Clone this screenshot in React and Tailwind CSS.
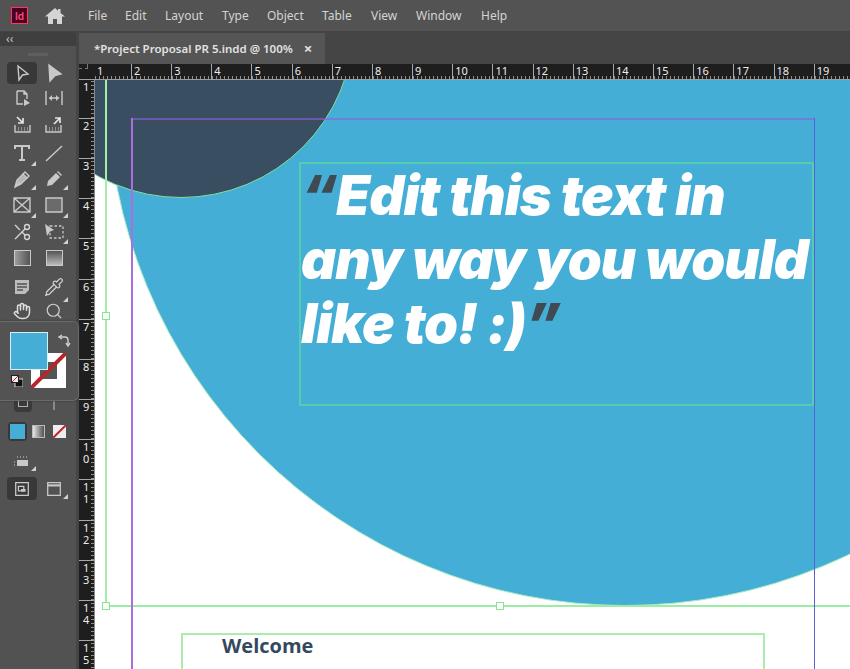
import React from 'react';
import { Hand, Search, Scissors, Pipette } from 'lucide-react';

const menus = [
  ['File', 'w-[37px]'],
  ['Edit', 'w-[40px]'],
  ['Layout', 'w-[57px]'],
  ['Type', 'w-[45px]'],
  ['Object', 'w-[55px]'],
  ['Table', 'w-[49px]'],
  ['View', 'w-[45px]'],
  ['Window', 'w-[65px]'],
  ['Help', 'w-[40px]'],
];

const hTicks = Array.from({ length: 18 }, (_, i) => i + 2);
const vTicks = Array.from({ length: 14 }, (_, i) => i + 2);

function Flyout() {
  return (
    <svg width="5" height="5" viewBox="0 0 5 5" className="absolute right-[1px] bottom-[1px]">
      <path d="M5 0V5H0Z" fill="#d0d0d0" />
    </svg>
  );
}

function Glyph({ children, size = 20 }) {
  return (
    <svg width={size} height={size} viewBox="0 0 20 20" fill="none" stroke="#c9c9c9" strokeWidth="1.4">
      {children}
    </svg>
  );
}

function Tool({ children, flyout, active }) {
  return (
    <div className={`relative w-[30px] h-full flex items-center justify-center rounded-sm ${active ? 'bg-[#383838]' : ''}`}>
      {children}
      {flyout && <Flyout />}
    </div>
  );
}

function Row({ children, className = 'h-[26px]' }) {
  return <div className={`flex items-center justify-between pl-[7px] pr-[7px] shrink-0 ${className}`}>{children}</div>;
}

function Toolbar() {
  return (
    <div className="relative w-[79px] h-full shrink-0 bg-[#525252] flex flex-col border-r-[3px] border-[#454545]">
      <div className="h-[14px] bg-[#3f3f3f] shrink-0 flex items-center pl-[6px] text-[#c4c4c4] text-[12px] leading-none">
        ‹‹
      </div>
      <div className="h-[16px] shrink-0 flex justify-center items-center">
        <div className="w-[20px] h-[3px] bg-[#5f5f5f]" />
      </div>

      <Row className="h-[22px]">
        <Tool active>
          <Glyph><path d="M6 3l10 8-5.5 1L7 17z" /></Glyph>
        </Tool>
        <Tool>
          <Glyph><path d="M5 2l12 9-6 1.5L6 18z" fill="#c9c9c9" /></Glyph>
        </Tool>
      </Row>
      <Row className="h-[26px] mt-[1px]">
        <Tool>
          <Glyph>
            <path d="M5 3h7l3 3v5M5 3v13h6M12 3v3h3" />
            <path d="M12 11l6 4-6 3z" fill="#c9c9c9" stroke="none" />
          </Glyph>
        </Tool>
        <Tool>
          <Glyph>
            <path d="M2 3v14M18 3v14M5 10h10" />
            <path d="M5 10l3-3v6zM15 10l-3-3v6z" fill="#c9c9c9" stroke="none" />
          </Glyph>
        </Tool>
      </Row>
      <Row className="h-[28px]">
        <Tool>
          <Glyph>
            <path d="M3 10v7h15v-7" />
            <path d="M6 13h1M9 13h1M12 13h1M15 13h1M6 15h1M9 15h1M12 15h1M15 15h1" strokeWidth="1.2" />
            <path d="M5 2l5 5M11 3v5H6" stroke="#e4e4e4" strokeWidth="1.7" />
          </Glyph>
        </Tool>
        <Tool>
          <Glyph>
            <path d="M2 10v7h15v-7" />
            <path d="M5 13h1M8 13h1M11 13h1M14 13h1M5 15h1M8 15h1M11 15h1M14 15h1" strokeWidth="1.2" />
            <path d="M10 9l6-6M11 3h5v5" stroke="#e4e4e4" strokeWidth="1.7" />
          </Glyph>
        </Tool>
      </Row>
      <Row className="h-[28px]">
        <Tool flyout>
          <Glyph>
            <path d="M3 6V3h14v3M10 3v14M7 17h6" strokeWidth="2" />
          </Glyph>
        </Tool>
        <Tool>
          <Glyph><path d="M2 18L18 3" strokeWidth="1.5" /></Glyph>
        </Tool>
      </Row>
      <Row className="h-[24px]">
        <Tool flyout>
          <Glyph>
            <path d="M3 18l2-7 6-6 4 4-6 6z" fill="#b5b5b5" />
            <path d="M11 5l2-2 4 4-2 2M3 18l5-5" />
          </Glyph>
        </Tool>
        <Tool flyout>
          <Glyph>
            <path d="M3 17l1-5 8-8 4 4-8 8z" fill="#c9c9c9" stroke="none" />
            <path d="M13 3l1-1 4 4-1 1z" fill="#c9c9c9" stroke="none" />
          </Glyph>
        </Tool>
      </Row>
      <Row className="h-[28px]">
        <Tool flyout>
          <Glyph><path d="M2 3h16v14H2zM2 3l16 14M18 3L2 17" /></Glyph>
        </Tool>
        <Tool flyout>
          <Glyph><path d="M2 3h16v14H2z" fill="#6b6b6b" /></Glyph>
        </Tool>
      </Row>
      <Row className="h-[26px]">
        <Tool>
          <Scissors size={20} color="#d4d4d4" strokeWidth={1.6} className="rotate-180" />
        </Tool>
        <Tool flyout>
          <Glyph>
            <path d="M6 4h13v12H6z" strokeDasharray="2.5 2" strokeWidth="1.3" />
            <path d="M1 2l9 6-4 1.5L3 14z" fill="#c9c9c9" stroke="none" />
          </Glyph>
        </Tool>
      </Row>
      <Row className="h-[26px]">
        <Tool>
          <div className="w-[17px] h-[16px] border border-[#c9c9c9] bg-gradient-to-r from-[#9c9c9c] to-[#555555]" />
        </Tool>
        <Tool>
          <div className="w-[17px] h-[16px] border border-[#c9c9c9] bg-gradient-to-b from-[#555555] to-[#bdbdbd]" />
        </Tool>
      </Row>
      <Row className="h-[32px]">
        <Tool>
          <Glyph>
            <path d="M3 3h14v10l-4 4H3z" fill="#bcbcbc" stroke="none" />
            <path d="M5 7h10M5 10h10M5 13h6" stroke="#525252" strokeWidth="1.3" />
          </Glyph>
        </Tool>
        <Tool flyout>
          <Pipette size={20} color="#cfcfcf" strokeWidth={1.5} />
        </Tool>
      </Row>
      <Row className="h-[16px]">
        <Tool>
          <Hand size={18} color="#dddddd" strokeWidth={2} className="shrink-0" />
        </Tool>
        <Tool>
          <Search size={18} color="#cfcfcf" strokeWidth={1.6} className="shrink-0" />
        </Tool>
      </Row>

      <div className="h-[79px] shrink-0" />

      <Row className="h-[14px]">
        <div className="w-[30px] h-full flex justify-center pl-[1px]">
          <div className="w-[18px] h-full bg-[#3a3a3a] rounded-b-sm flex justify-center">
            <div className="w-[10px] h-[9px] border-x border-b border-[#b0b0b0]" />
          </div>
        </div>
        <div className="w-[30px] flex justify-center">
          <div className="w-[2px] h-[9px] bg-[#8a8a8a]" />
        </div>
      </Row>
      <div className="h-[20px] mt-[9px] shrink-0 flex items-center pl-[8px]">
        <div className="w-[19px] h-[19px] p-[2px] bg-[#383838] rounded-sm">
          <div className="w-full h-full bg-[#45aed6]" />
        </div>
        <div className="w-[13px] h-[13px] ml-[5px] border border-[#bbbbbb] bg-gradient-to-r from-[#e8e8e8] to-[#555555]" />
        <svg width="13" height="13" viewBox="0 0 13 13" className="ml-[8px]">
          <rect width="13" height="13" fill="#eeeeee" />
          <path d="M0 13L13 0" stroke="#c0272d" strokeWidth="2" />
        </svg>
      </div>
      <Row className="h-[22px] mt-[9px]">
        <Tool flyout>
          <Glyph>
            <path d="M5 9h11v6H5z" fill="#c9c9c9" stroke="none" />
            <path d="M2 11h1M2 14h1M5 6h1M8 6h1M11 6h1M14 6h1" strokeWidth="1.2" />
          </Glyph>
        </Tool>
        <div className="w-[30px]" />
      </Row>
      <Row className="h-[23px] mt-[5px]">
        <Tool active>
          <Glyph size={18}>
            <path d="M3 3h14v14H3z" />
            <path d="M6 7h6v5H6z" />
            <path d="M9 10h5v3H9z" fill="#c9c9c9" stroke="none" />
          </Glyph>
        </Tool>
        <Tool flyout>
          <Glyph size={18}>
            <path d="M3 3h14v14H3z" />
            <path d="M3 6h14" strokeWidth="2.4" />
          </Glyph>
        </Tool>
      </Row>

      {/* floating fill and stroke panel */}
      <div className="absolute left-0 top-[289px] w-[79px] h-[80px] bg-[#535353] border border-l-0 border-[#6a6a6a] rounded-r-md shadow-[0_0_2px_#333]">
        <div className="absolute left-[10px] top-[10px] w-[38px] h-[38px] bg-[#45aed6] border border-[#d8eef7] z-10" />
        <div className="absolute left-[31px] top-[31px] w-[35px] h-[35px] bg-white flex items-center justify-center overflow-hidden">
          <div className="w-[17px] h-[17px] bg-[#555555]" />
          <svg className="absolute inset-0" viewBox="0 0 35 35">
            <path d="M0 35L35 0" stroke="#b3272d" strokeWidth="4" />
          </svg>
        </div>
        <svg className="absolute left-[57px] top-[12px]" width="14" height="14" viewBox="0 0 14 14" fill="none" stroke="#d0d0d0" strokeWidth="1.4">
          <path d="M3 3h5a3 3 0 0 1 3 3v5" />
          <path d="M5 1L2 3l3 2M9 9l2 3 2-3" />
        </svg>
        <svg className="absolute left-[11px] top-[53px]" width="12" height="12" viewBox="0 0 12 12">
          <rect x="4" y="4" width="8" height="8" fill="#111111" stroke="#dddddd" />
          <rect x="0.5" y="0.5" width="7" height="7" fill="#eeeeee" stroke="#222222" />
          <path d="M1 7L7 1" stroke="#c0272d" />
        </svg>
      </div>
    </div>
  );
}

function HorizontalRuler() {
  const label = "block text-[11px] leading-[13px] text-[#ececec] pl-[2px] font-['Noto_Sans',sans-serif]";
  const ticks = 'bg-[repeating-linear-gradient(90deg,#8c8c8c_0,#8c8c8c_1px,transparent_1px,transparent_4px)] bg-[length:100%_3px] bg-bottom bg-no-repeat';
  return (
    <div className="h-[16px] shrink-0 bg-[#1e1e1e] flex border-b border-[#a0a0a0] overflow-hidden">
      <div className="w-[16px] shrink-0">
        <div className="w-[9px] h-[5px] border-b border-r border-dashed border-[#777777]" />
      </div>
      <div className={`w-[36px] shrink-0 ${ticks}`}>
        <span className={label}>1</span>
      </div>
      {hTicks.map(n => (
        <div key={n} className={`w-[40.17px] shrink-0 border-l border-[#a8a8a8] ${ticks}`}>
          <span className={label}>{n}</span>
        </div>
      ))}
    </div>
  );
}

function VerticalRuler() {
  const label = "block w-[12px] pl-[4px] pt-[1px] break-all text-[11px] leading-[12px] text-[#ececec] font-['Noto_Sans',sans-serif]";
  const ticks = 'bg-[repeating-linear-gradient(0deg,#8c8c8c_0,#8c8c8c_1px,transparent_1px,transparent_4px)] bg-[length:3px_100%] bg-right bg-no-repeat';
  return (
    <div className="w-[16px] shrink-0 h-full bg-[#1e1e1e] flex flex-col overflow-hidden border-r border-[#8c8c8c]">
      <div className={`h-[38px] shrink-0 ${ticks}`}>
        <span className={label}>1</span>
      </div>
      {vTicks.map(n => (
        <div key={n} className={`h-[40.17px] shrink-0 border-t border-[#a8a8a8] ${ticks}`}>
          <span className={label}>{n}</span>
        </div>
      ))}
    </div>
  );
}

function Handle({ className }) {
  return <div className={`absolute w-[8px] h-[8px] bg-white border border-[#86e58f] ${className}`} />;
}

function Canvas() {
  return (
    <div className="relative flex-1 h-full bg-white overflow-hidden">
      {/* artwork */}
      <div className="absolute left-[12px] top-[-510px] w-[1036px] h-[1036px] rounded-full bg-[#45aed6] border border-[#a5ecc0]" />
      <div className="absolute left-[-87px] top-[-228px] w-[346px] h-[346px] rounded-full bg-[#394e60] border border-[#7fe0a0]" />

      {/* margin and frame guides */}
      <div className="absolute left-[10px] top-0 w-[2px] h-[525px] bg-[#a5eeaa]" />
      <div className="absolute left-[10px] top-[525px] w-[745px] h-[2px] bg-[#9deca5]" />
      <div className="absolute left-[36px] top-[38px] w-[683px] h-[2px] bg-[#8a5fe0]/60" />
      <div className="absolute left-[36px] top-[38px] w-[2px] h-[551px] bg-[#a96fdc]" />
      <div className="absolute left-[719px] top-[38px] w-[1px] h-[551px] bg-[#5a5fd6]" />
      <Handle className="left-[7px] top-[232px]" />
      <Handle className="left-[7px] top-[522px]" />
      <Handle className="left-[401px] top-[522px]" />

      {/* quote frame */}
      <div className="absolute left-[204px] top-[82px] w-[515px] h-[244px] border-2 border-[#52cdb0] font-['Inter',sans-serif] font-black italic text-white text-[54.5px] leading-[64px] whitespace-nowrap">
        <div className="mt-[-1px] tracking-[-1px]">
          <span className="text-[#404a52]">“</span>Edit this text in
        </div>
        <div className="tracking-[-1px]">any way you would</div>
        <div className="tracking-[-1px]">
          like to! :)<span className="text-[#404a52]">”</span>
        </div>
      </div>

      {/* welcome frame */}
      <div className="absolute left-[86px] top-[553px] w-[584px] h-[61px] border-2 border-[#a8edac] pl-[39px] font-['Open_Sans',sans-serif] font-bold text-[20px] leading-[21px] text-[#34495e]">
        Welcome
      </div>
    </div>
  );
}

export default function App() {
  return (
    <div className="w-[850px] h-[669px] overflow-hidden flex flex-col bg-[#535353] font-['Noto_Sans',sans-serif]">
      <div className="h-[32px] shrink-0 flex items-center bg-[#535353] border-b border-[#444444]">
        <div className="ml-[11px] w-[17px] h-[17px] bg-[#49021f] border border-[#ff3366] flex items-center justify-center font-['Inter',sans-serif] text-[10px] leading-none font-semibold text-[#ff4d80]">
          Id
        </div>
        <svg width="20" height="18" viewBox="0 0 20 18" className="ml-[17px]">
          <path d="M10 1L0 9.5h3V17h5v-5h4v5h5V9.5h3L15.5 6V2h-2.5v1.8z" fill="#d4d4d4" />
        </svg>
        <nav className="flex ml-[23px] text-[12px] text-[#d4d4d4]">
          {menus.map(([label, w]) => (
            <span key={label} className={w}>{label}</span>
          ))}
        </nav>
      </div>
      <div className="flex flex-1 min-h-0">
        <Toolbar />
        <div className="flex-1 min-w-0 flex flex-col">
          <div className="h-[32px] shrink-0 bg-[#454545] flex items-end">
            <div className="w-[246px] h-[31px] bg-[#555555] flex items-center pl-[15px] text-[11.5px] font-semibold text-[#e2e2e2] whitespace-nowrap">
              *Project Proposal PR 5.indd @ 100%
              <span className="ml-[11px] text-[15px] font-bold leading-none">×</span>
            </div>
          </div>
          <HorizontalRuler />
          <div className="flex flex-1 min-h-0">
            <VerticalRuler />
            <Canvas />
          </div>
        </div>
      </div>
    </div>
  );
}
